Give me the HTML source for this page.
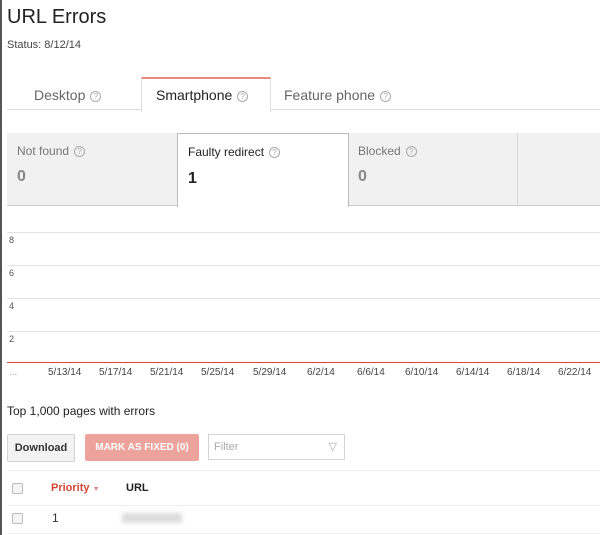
<!DOCTYPE html>
<html><head><style>
body{margin:0;width:600px;height:535px;overflow:hidden;background:#fff;font-family:"Liberation Sans",Arial,sans-serif;color:#222;position:relative}
.a{position:absolute;white-space:nowrap}
.q{display:inline-block;width:9px;height:9px;border:1px solid #aaa;border-radius:50%;font-size:8px;line-height:9px;text-align:center;color:#aaa;vertical-align:1px;margin-left:5px}
.hl{position:absolute;left:7px;right:0;height:1px;background:#e2e2e2}
.d{position:absolute;top:367px;font-size:10px;color:#444}
.cb{position:absolute;width:9px;height:9px;border:1px solid #bbb;border-radius:2px;background:#f4f4f4}
</style></head><body>
<div style="position:absolute;left:0;top:0;width:2px;height:535px;background:#555"></div>
<div class="a" style="left:7px;top:6px;font-size:20px">URL Errors</div>
<div class="a" style="left:7px;top:39px;font-size:11px;color:#444">Status: 8/12/14</div>
<div class="hl" style="top:109px;background:#ddd"></div>
<div style="position:absolute;left:141px;top:77px;width:128px;height:33px;background:#fff;border:1px solid #ddd;border-top:2px solid #e88a7e;border-bottom:none"></div>
<div class="a" style="left:34px;top:87px;font-size:14px;color:#666">Desktop<span class="q">?</span></div>
<div class="a" style="left:156px;top:87px;font-size:14px;color:#222">Smartphone<span class="q">?</span></div>
<div class="a" style="left:284px;top:87px;font-size:14px;color:#666">Feature phone<span class="q">?</span></div>
<div style="position:absolute;left:7px;top:133px;width:593px;height:72px;background:#f1f1f1;border-bottom:1px solid #ccc"></div>
<div style="position:absolute;left:517px;top:133px;width:1px;height:72px;background:#d8d8d8"></div>
<div style="position:absolute;left:177px;top:133px;width:170px;height:73px;background:#fff;border:1px solid #bbb;border-bottom:none"></div>
<div class="a" style="left:17px;top:144px;font-size:12px;color:#777">Not found<span class="q">?</span></div>
<div class="a" style="left:17px;top:168px;font-size:16px;font-weight:bold;color:#888">0</div>
<div class="a" style="left:188px;top:145px;font-size:12px;color:#222">Faulty redirect<span class="q">?</span></div>
<div class="a" style="left:188px;top:170px;font-size:16px;font-weight:bold;color:#222">1</div>
<div class="a" style="left:358px;top:144px;font-size:12px;color:#777">Blocked<span class="q">?</span></div>
<div class="a" style="left:358px;top:168px;font-size:16px;font-weight:bold;color:#888">0</div>
<div class="hl" style="top:232px"></div><div class="hl" style="top:265px"></div>
<div class="hl" style="top:298px"></div><div class="hl" style="top:331px"></div>
<div class="a" style="left:9px;top:235px;font-size:9px;color:#555">8</div>
<div class="a" style="left:9px;top:268px;font-size:9px;color:#555">6</div>
<div class="a" style="left:9px;top:301px;font-size:9px;color:#555">4</div>
<div class="a" style="left:9px;top:334px;font-size:9px;color:#555">2</div>
<div style="position:absolute;left:7px;right:0;top:362px;height:1px;background:#d9453a"></div>
<div class="d" style="left:9px;color:#999">...</div>
<div class="d" style="left:48px">5/13/14</div><div class="d" style="left:99px">5/17/14</div>
<div class="d" style="left:150px">5/21/14</div><div class="d" style="left:201px">5/25/14</div>
<div class="d" style="left:253px">5/29/14</div><div class="d" style="left:307px">6/2/14</div>
<div class="d" style="left:357px">6/6/14</div><div class="d" style="left:405px">6/10/14</div>
<div class="d" style="left:456px">6/14/14</div><div class="d" style="left:507px">6/18/14</div>
<div class="d" style="left:558px">6/22/14</div>
<div class="a" style="left:7px;top:404px;font-size:12px;color:#222">Top 1,000 pages with errors</div>
<div class="a" style="left:7px;top:434px;width:66px;height:26px;border:1px solid #d4d4d4;background:#f3f3f3;border-radius:2px;font-size:11px;font-weight:bold;line-height:26px;text-align:center;color:#333">Download</div>
<div class="a" style="left:85px;top:434px;width:114px;height:27px;background:#eca39b;border-radius:2px;font-size:10px;font-weight:bold;line-height:27px;text-align:center;color:#fff">MARK AS FIXED (0)</div>
<div class="a" style="left:208px;top:434px;width:137px;height:26px;border:1px solid #d4d4d4;font-size:11px;line-height:24px;color:#aaa;box-sizing:border-box;padding-left:5px">Filter<span style="position:absolute;right:7px;top:0;color:#aaa">▽</span></div>
<div class="hl" style="top:470px;left:7px;background:#eee"></div>
<div class="cb" style="left:12px;top:483px"></div>
<div class="a" style="left:51px;top:482px;font-size:11px;font-weight:bold;color:#d14836">Priority <span style="font-size:7px;color:#d88">▼</span></div>
<div class="a" style="left:126px;top:482px;font-size:11px;font-weight:bold;color:#222">URL</div>
<div class="hl" style="top:505px;left:7px;background:#eee"></div>
<div class="cb" style="left:12px;top:513px"></div>
<div class="a" style="left:52px;top:511px;font-size:12px;color:#333">1</div>
<div style="position:absolute;left:122px;top:513px;width:60px;height:10px;background:#ddd;filter:blur(2px)"></div>
<div class="hl" style="top:533px;left:7px;background:#eee"></div>
</body></html>
